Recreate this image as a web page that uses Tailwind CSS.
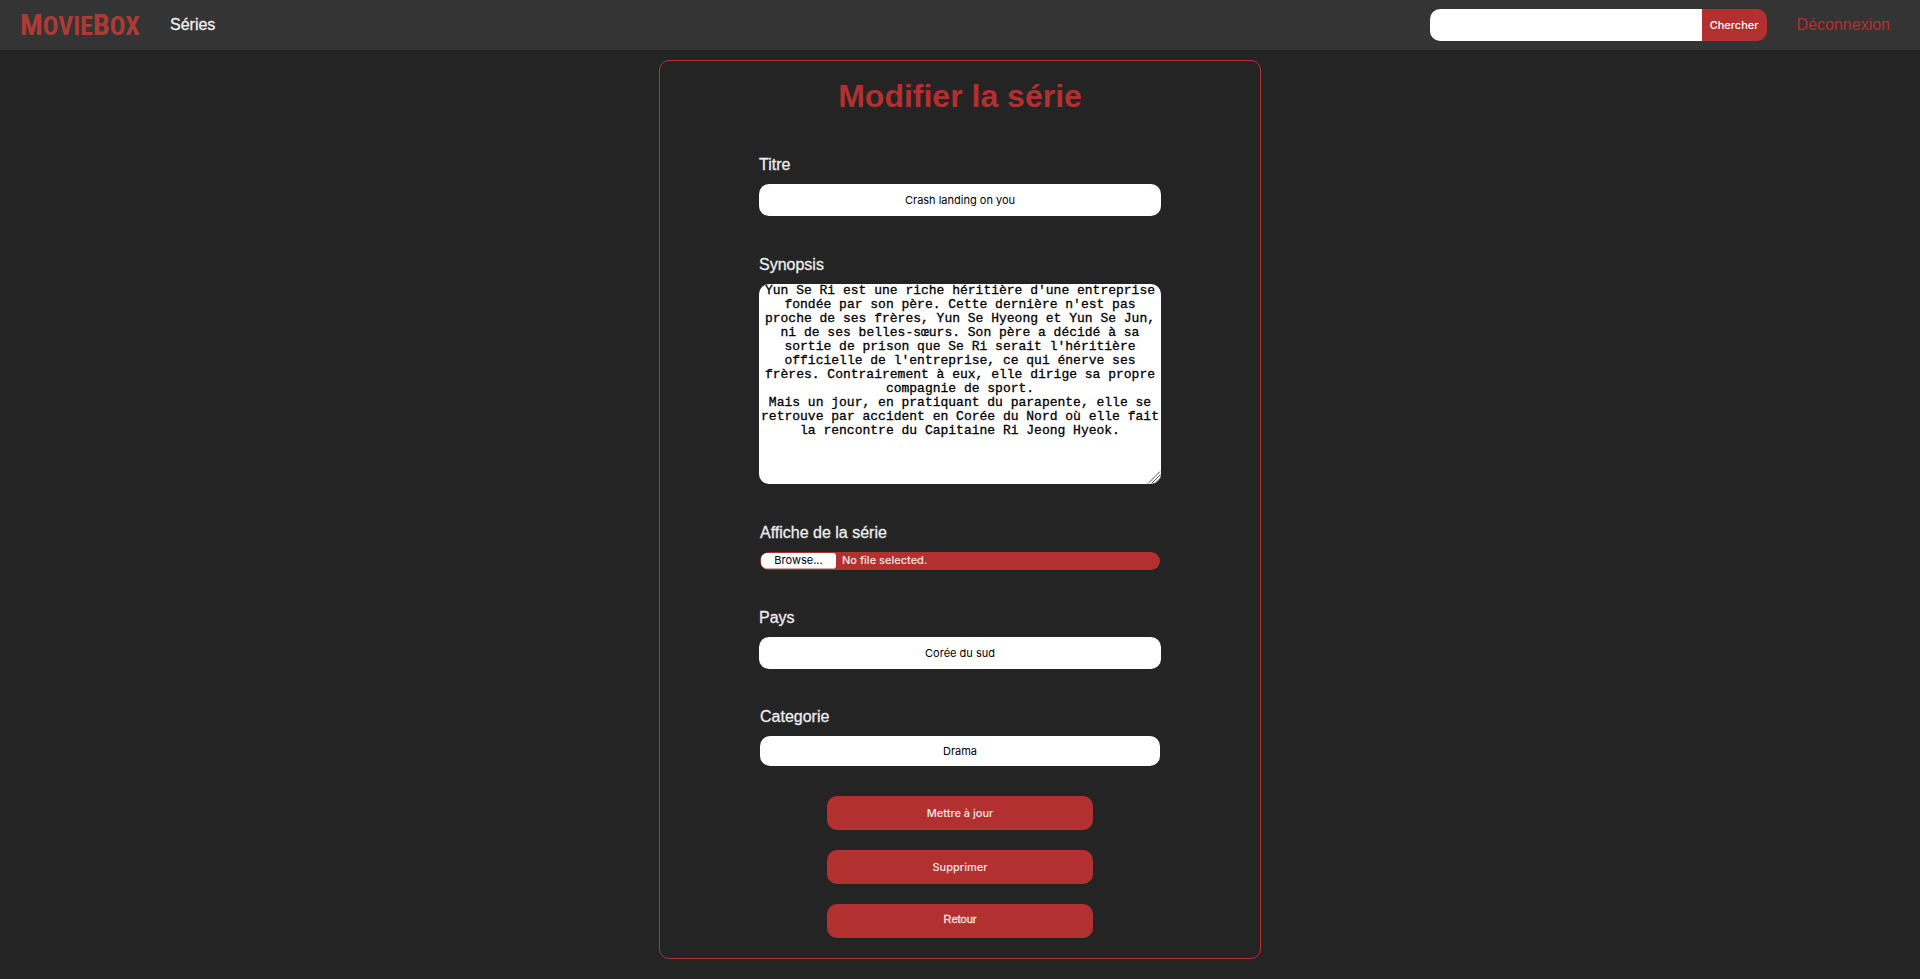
<!DOCTYPE html>
<html lang="fr">
<head>
<meta charset="utf-8">
<meta name="viewport" content="width=device-width, initial-scale=1">
<title>MovieBox - Modifier la série</title>
<script src="https://cdn.jsdelivr.net/npm/@tailwindcss/browser@4"></script>
</head>
<body class="min-h-screen bg-[#242424] font-['Liberation_Sans',Arial,sans-serif] text-base leading-5 text-[#ececec]">
<header class="flex h-[50px] items-center bg-[#343434] pr-[30px] pl-5">
  <a href="#" class="w-[120px] font-['Liberation_Sans_Narrow','Roboto_Condensed','Liberation_Sans',sans-serif] text-[30px] leading-8 font-bold whitespace-nowrap text-[#ae3a36] uppercase"><span>M</span><span class="text-[26px]">ovie</span><span>B</span><span class="text-[26px]">ox</span></a>
  <nav class="ml-[30px]"><a href="#" class="text-[#f0f0f0] [-webkit-text-stroke:0.3px_#f0f0f0]">Séries</a></nav>
  <form class="ml-auto flex h-8 overflow-hidden rounded-[10px] font-[Inter,sans-serif] text-[11px]">
    <input type="search" aria-label="Chercher une série" class="w-[272px] bg-white px-2 text-black outline-none">
    <button type="button" class="w-[65px] bg-[#b33030] font-medium text-white">Chercher</button>
  </form>
  <a href="#" class="ml-[30px] text-[#b33030]">Déconnexion</a>
</header>
<main class="flex justify-center px-4 pt-2.5 pb-5">
  <form class="flex w-full max-w-[602px] flex-col items-center rounded-[10px] border border-[#b33030] px-4 pt-[17px] pb-5">
    <h1 class="text-[32px] leading-9 font-bold text-[#b33030]">Modifier la série</h1>

    <div class="mt-[41px] flex w-full max-w-[402px] flex-col gap-[9px]">
      <label for="titre" class="[-webkit-text-stroke:0.3px_#ececec]">Titre</label>
      <input id="titre" type="text" value="Crash landing on you" class="h-8 w-full rounded-[10px] bg-white text-center font-[Inter,sans-serif] text-[11px] text-black">
    </div>

    <div class="mt-[39px] flex w-full max-w-[402px] flex-col gap-[9px]">
      <label for="synopsis" class="[-webkit-text-stroke:0.3px_#ececec]">Synopsis</label>
      <div class="relative flex">
        <textarea id="synopsis" class="h-[200px] w-full resize-none overflow-auto rounded-[10px] bg-white px-0.5 text-center font-['Liberation_Mono','Courier_New',monospace] text-[13px] leading-[14px] text-black [-webkit-text-stroke:0.3px_#000]">Yun Se Ri est une riche héritière d'une entreprise fondée par son père. Cette dernière n'est pas proche de ses frères, Yun Se Hyeong et Yun Se Jun, ni de ses belles-sœurs. Son père a décidé à sa sortie de prison que Se Ri serait l'héritière officielle de l'entreprise, ce qui énerve ses frères. Contrairement à eux, elle dirige sa propre compagnie de sport.
Mais un jour, en pratiquant du parapente, elle se retrouve par accident en Corée du Nord où elle fait la rencontre du Capitaine Ri Jeong Hyeok.</textarea>
        <svg class="pointer-events-none absolute right-0 bottom-0 size-3.5" viewBox="0 0 14 14" fill="none" stroke="#555" aria-hidden="true"><path d="M1 13.5 13 1.5M4.500 13.500 13.500 4.500M8 13.500 13.500 8"/></svg>
      </div>
    </div>

    <div class="mt-[39px] flex w-full max-w-[400px] flex-col gap-[9px]">
      <label for="affiche" class="[-webkit-text-stroke:0.3px_#ececec]">Affiche de la série</label>
      <div class="relative flex h-[18px] items-start rounded-[10px] bg-[#b33030] p-px font-[Inter,sans-serif] text-[11px] leading-[15px]">
        <span class="h-4 w-[75px] rounded-l-[6px] rounded-r-[3px] border-b border-[#d9a0a0] bg-white text-center text-black">Browse...</span>
        <span class="ml-1.5 font-medium text-[#f5e6e6]">No file selected.</span>
        <input id="affiche" type="file" class="absolute inset-0 opacity-0">
      </div>
    </div>

    <div class="mt-[38px] flex w-full max-w-[402px] flex-col gap-[9px]">
      <label for="pays" class="[-webkit-text-stroke:0.3px_#ececec]">Pays</label>
      <input id="pays" type="text" value="Corée du sud" class="h-8 w-full rounded-[10px] bg-white text-center font-[Inter,sans-serif] text-[11px] text-black">
    </div>

    <div class="mt-[38px] flex w-full max-w-[400px] flex-col gap-[9px]">
      <label for="categorie" class="[-webkit-text-stroke:0.3px_#ececec]">Categorie</label>
      <select id="categorie" class="h-[30px] w-full appearance-none rounded-[10px] bg-white text-center font-[Inter,sans-serif] text-[11px] text-black [text-align-last:center]"><option>Drama</option></select>
    </div>

    <div class="mt-[30px] flex w-full max-w-[266px] flex-col gap-5 text-[11px] text-[#f5e6e6]">
      <button type="button" class="h-[34px] rounded-[10px] bg-[#b33030] font-[Inter,sans-serif] font-medium">Mettre à jour</button>
      <button type="button" class="h-[34px] rounded-[10px] bg-[#b33030] font-[Inter,sans-serif] font-medium">Supprimer</button>
      <a href="#" class="h-[34px] rounded-[10px] bg-[#b33030] pt-[5px] text-center [-webkit-text-stroke:0.3px_#f5e6e6]">Retour</a>
    </div>
  </form>
</main>
</body>
</html>
